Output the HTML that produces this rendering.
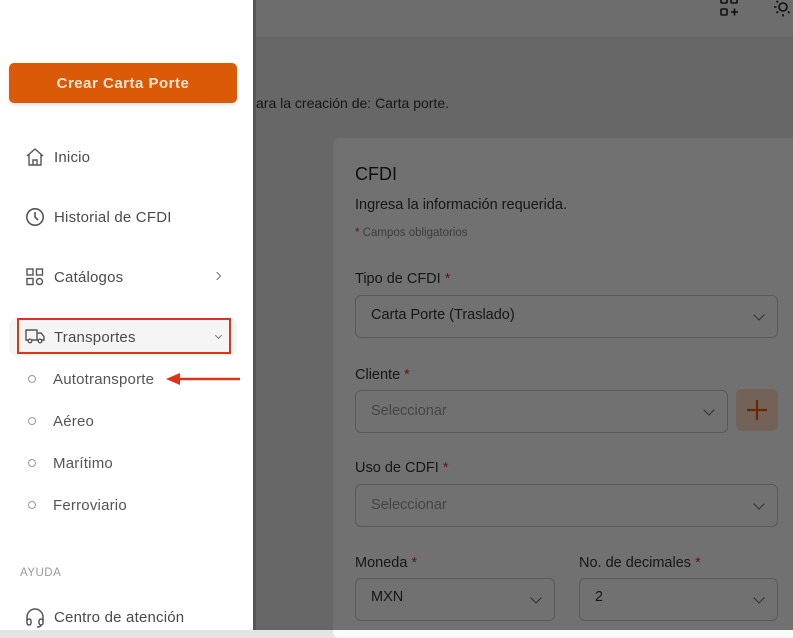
<!DOCTYPE html>
<html><head><meta charset="utf-8"><style>
*{box-sizing:border-box;margin:0;padding:0}
body{width:793px;height:630px;overflow:hidden;background:#e4e4e4;font-family:"Liberation Sans",sans-serif;position:relative}
.top{position:absolute;left:0;top:0;width:793px;height:38px;background:#f2f2f2;border-bottom:1px solid #d8d8d8}
.sub{position:absolute;left:256px;top:95px;font-size:14px;color:#333}
.card{position:absolute;left:333px;top:138px;width:470px;height:500px;background:#fafafa;border-radius:6px}
.abs{position:absolute}
.lbl{font-size:14.5px;color:#333}
.lbl b{color:#e0321a;font-weight:normal}
.sel{position:absolute;border:1px solid #c8c8c8;border-radius:6px;height:38px;font-size:14.5px;color:#333;padding:10px 15px}
.sel.ph{color:#9a9a9a}
.chev{position:absolute;right:14px;top:16px;width:8px;height:8px;border-right:1.3px solid #666;border-bottom:1.3px solid #666;transform:rotate(45deg)}
.ov{position:absolute;left:0;top:0;width:793px;height:630px;background:rgba(0,0,0,.55)}
.side{position:absolute;left:0;top:0;width:253px;height:630px;background:#fff}
.edge{position:absolute;left:253px;top:0;width:3px;height:630px;background:#555}
.btn{position:absolute;left:9px;top:63px;width:228px;height:40px;background:#db5a07;border-radius:5px;color:#fbe3d3;font-size:15px;font-weight:bold;text-align:center;line-height:41px;letter-spacing:.5px;box-shadow:0 2px 3px rgba(0,0,0,.12)}
.item{position:absolute;left:54px;font-size:15px;color:#4a4a4a;letter-spacing:.2px}
.ico{position:absolute;left:25px}
.subi{position:absolute;left:53px;font-size:15px;color:#555;letter-spacing:.2px}
.dot{position:absolute;left:28px;width:8px;height:8px;border:1px solid #999;border-radius:50%}
</style></head><body>
<div class="top">
<svg class="abs" style="left:719px;top:0" width="22" height="18" viewBox="0 0 22 18" fill="none" stroke="#222" stroke-width="1.6"><rect x="2" y="-2" width="6" height="5" rx="1"/><rect x="12" y="-2" width="6" height="5" rx="1"/><rect x="2" y="9" width="6" height="6" rx="1"/><path d="M12 12h7M15.5 8.5v7"/></svg>
<svg class="abs" style="left:770px;top:0" width="23" height="20" viewBox="0 0 23 20" fill="none" stroke="#222" stroke-width="1.6"><circle cx="13" cy="7" r="4"/><path d="M4 7h2.5M13 14v2.5M6.5 13l1.6-1.6M19.5 13l-1.6-1.6M6.5 1l1.6 1.6"/></svg>
</div>
<div class="sub">ara la creación de: Carta porte.</div>
<div class="card"></div>
<div class="abs" style="left:355px;top:164px;font-size:18px;color:#222">CFDI</div>
<div class="abs" style="left:355px;top:197px;font-size:14.5px;color:#333">Ingresa la información requerida.</div>
<div class="abs" style="left:355px;top:227px;font-size:11.5px;color:#888"><span style="color:#e0321a">*</span> Campos obligatorios</div>
<div class="abs lbl" style="left:355px;top:271px">Tipo de CFDI <b>*</b></div>
<div class="sel" style="left:355px;top:295px;width:423px;height:43px;padding-top:11px">Carta Porte (Traslado)<div class="chev" style="top:15px"></div></div>
<div class="abs lbl" style="left:355px;top:367px">Cliente <b>*</b></div>
<div class="sel ph" style="left:355px;top:390px;width:373px;height:43px;padding-top:12px">Seleccionar<div class="chev" style="top:15px"></div></div>
<div class="abs" style="left:736px;top:389px;width:42px;height:42px;background:#fcd9c2;border-radius:6px"><svg width="42" height="42"><path d="M21 11v20M11 21h20" stroke="#e65c00" stroke-width="2.2"/></svg></div>
<div class="abs lbl" style="left:355px;top:460px">Uso de CDFI <b>*</b></div>
<div class="sel ph" style="left:355px;top:484px;width:423px;height:43px;padding-top:12px">Seleccionar<div class="chev" style="top:15px"></div></div>
<div class="abs lbl" style="left:355px;top:555px">Moneda <b>*</b></div>
<div class="abs lbl" style="left:579px;top:555px">No. de decimales <b>*</b></div>
<div class="sel" style="left:355px;top:578px;width:200px;height:43px;padding-top:10px">MXN<div class="chev" style="top:15px"></div></div>
<div class="sel" style="left:579px;top:578px;width:199px;height:43px;padding-top:10px">2<div class="chev" style="top:15px"></div></div>
<div class="ov"></div>

<div class="side"></div>
<div class="edge"></div>
<div class="btn">Crear Carta Porte</div>
<svg class="ico" style="top:147px" width="20" height="20" viewBox="0 0 20 20" fill="none" stroke="#555" stroke-width="1.4"><path d="M2 9L10 2l8 7M4 7.5V18h12V7.5M8 18v-5h4v5"/></svg>
<div class="item" style="top:149px">Inicio</div>
<svg class="ico" style="top:207px" width="20" height="20" viewBox="0 0 20 20" fill="none" stroke="#555" stroke-width="1.6"><circle cx="10" cy="10" r="8.2"/><path d="M10 5v5l3 3"/></svg>
<div class="item" style="top:209px">Historial de CFDI</div>
<svg class="ico" style="top:267px" width="20" height="20" viewBox="0 0 20 20" fill="none" stroke="#555" stroke-width="1.4"><rect x="2" y="2" width="6" height="6"/><rect x="11.5" y="2" width="6" height="6"/><rect x="2" y="11.5" width="6" height="6"/><circle cx="14.5" cy="14.5" r="3"/></svg>
<div class="item" style="top:269px">Catálogos</div>
<div class="abs" style="left:214px;top:273px;width:6px;height:6px;border-right:1.2px solid #777;border-top:1.2px solid #777;transform:rotate(45deg)"></div>
<div class="abs" style="left:9px;top:318px;width:228px;height:38px;background:#f5f5f5;border-radius:8px"></div>
<div class="abs" style="left:17px;top:318px;width:214px;height:36px;border:2px solid #e0321a"></div>
<svg class="ico" style="top:327px" width="20" height="18" viewBox="0 0 20 18" fill="none" stroke="#555" stroke-width="1.4"><path d="M1 3h11v10H1zM12 6h4l3 3.5V13h-7"/><circle cx="5" cy="14" r="1.8" fill="#fff"/><circle cx="15" cy="14" r="1.8" fill="#fff"/></svg>
<div class="item" style="top:329px">Transportes</div>
<div class="abs" style="left:216px;top:333px;width:5px;height:5px;border-right:1.1px solid #777;border-bottom:1.1px solid #777;transform:rotate(45deg)"></div>
<div class="dot" style="top:375px"></div><div class="subi" style="top:371px">Autotransporte</div>
<svg class="abs" style="left:164px;top:371px" width="76" height="16"><path d="M76 8H14" stroke="#e0321a" stroke-width="2.5"/><path d="M2 8l14-6v12z" fill="#e0321a"/></svg>
<div class="dot" style="top:417px"></div><div class="subi" style="top:413px">Aéreo</div>
<div class="dot" style="top:459px"></div><div class="subi" style="top:455px">Marítimo</div>
<div class="dot" style="top:501px"></div><div class="subi" style="top:497px">Ferroviario</div>
<div class="abs" style="left:20px;top:567px;font-size:11.5px;color:#999;letter-spacing:.5px">AYUDA</div>
<svg class="ico" style="top:606px" width="20" height="22" viewBox="0 0 20 22" fill="none" stroke="#555" stroke-width="1.5"><path d="M2 15v-4a8 8 0 0 1 16 0v4"/><rect x="2" y="13" width="4" height="6" rx="2"/><rect x="14" y="13" width="4" height="6" rx="2"/><path d="M16 19q0 2-4 2"/></svg>
<div class="item" style="top:609px">Centro de atención</div>
</body></html>
